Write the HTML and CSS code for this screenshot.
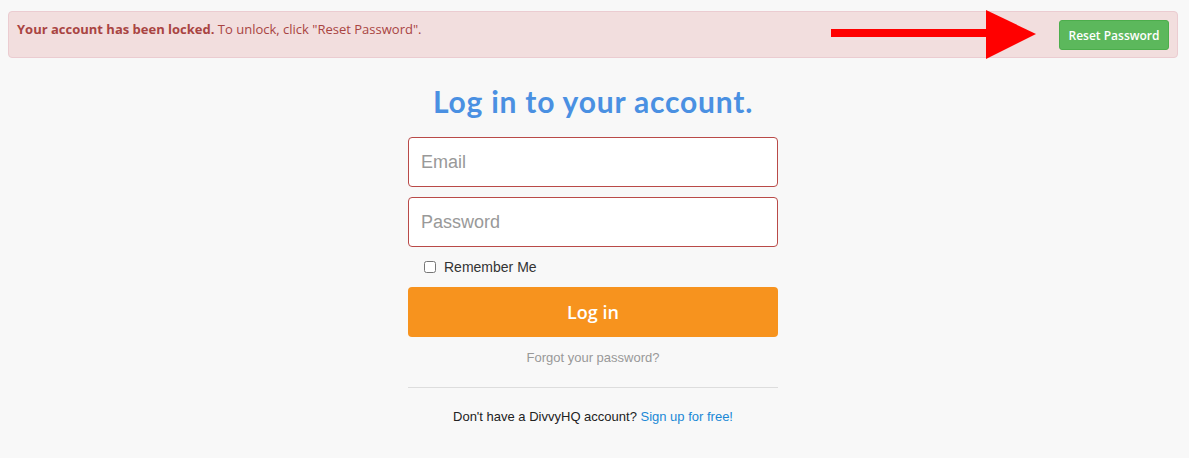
FILE: index.html
```html
<!DOCTYPE html>
<html>
<head>
<meta charset="utf-8">
<link rel="stylesheet" href="styles.css">
</head>
<body>
<div class="alert">
  <p class="alert-text"><strong>Your account has been locked.</strong> To unlock, click "Reset Password".</p>
  <button class="btn-reset">Reset Password</button>
  <svg class="arrow" width="210" height="50" viewBox="0 0 210 50">
    <rect x="0" y="19" width="158" height="8" fill="#ff0000"/>
    <polygon points="155,0 205,24 155,49" fill="#ff0000"/>
  </svg>
</div>
<main class="login">
  <h1 class="title">Log in to your account.</h1>
  <input class="field" type="text" placeholder="Email">
  <input class="field" type="password" placeholder="Password">
  <label class="remember"><input type="checkbox" class="check"> Remember Me</label>
  <button class="btn-login">Log in</button>
  <a class="forgot">Forgot your password?</a>
  <hr class="divider">
  <p class="signup">Don't have a DivvyHQ account? <a class="signup-link">Sign up for free!</a></p>
</main>
</body>
</html>
```
FILE: styles.css
```css
html, body { margin: 0; padding: 0; }
body {
  background: #f8f8f8;
  font-family: "Liberation Sans", Arial, sans-serif;
  color: #333;
  padding: 11px 11px 0 8px;
}
.alert {
  position: relative;
  display: flex;
  justify-content: space-between;
  align-items: flex-start;
  background: #f2dede;
  border: 1px solid #ebccd1;
  border-radius: 4px;
  padding: 8px 8px 7px 8px;
  height: 30px;
}
.alert-text {
  margin: 0;
  font-family: "Open Sans", sans-serif;
  font-size: 13px;
  line-height: 18px;
  color: #a94442;
}
.alert-text strong { font-weight: 700; }
.btn-reset {
  background: #5cb85c;
  border: 1px solid #4cae4c;
  border-radius: 3px;
  color: #fff;
  font-family: "Open Sans", sans-serif;
  font-size: 12px;
  font-weight: 600;
  width: 110px;
  height: 30px;
  padding: 0;
}
.arrow {
  position: absolute;
  left: 822px;
  top: -2px;
}
.login {
  width: 370px;
  margin: 0 auto;
  display: flex;
  flex-direction: column;
}
.title {
  margin: 25px 0 18px;
  text-align: center;
  font-family: "Lato", sans-serif;
  font-weight: 700;
  font-size: 30px;
  letter-spacing: 0.8px;
  line-height: 36px;
  color: #4a90e2;
}
.field {
  box-sizing: border-box;
  height: 50px;
  margin: 0 0 10px;
  border: 1px solid #b94a48;
  border-radius: 4px;
  background: #fff;
  padding: 0 12px;
  font-family: "Liberation Sans", Arial, sans-serif;
  font-size: 18px;
  color: #555;
}
.field::placeholder { color: #999; }
.remember {
  display: flex;
  align-items: center;
  padding-left: 16px;
  height: 20px;
  font-size: 14px;
  color: #333;
  margin: 0 0 10px;
}
.check {
  margin: 0 8px 0 0;
  width: 12px;
  height: 12px;
}
.btn-login {
  height: 50px;
  border: none;
  border-radius: 4px;
  background: #f7931e;
  color: #fff;
  font-family: "Open Sans", sans-serif;
  font-size: 18px;
  font-weight: 600;
}
.forgot {
  margin-top: 13px;
  text-align: center;
  font-size: 13px;
  line-height: 16px;
  color: #999;
}
.divider {
  width: 100%;
  border: 0;
  border-top: 1px solid #ddd;
  margin: 21px 0 0;
}
.signup {
  margin: 21px 0 0;
  text-align: center;
  font-size: 13px;
  line-height: 16px;
  color: #222;
}
.signup-link { color: #1a88d6; }
```
